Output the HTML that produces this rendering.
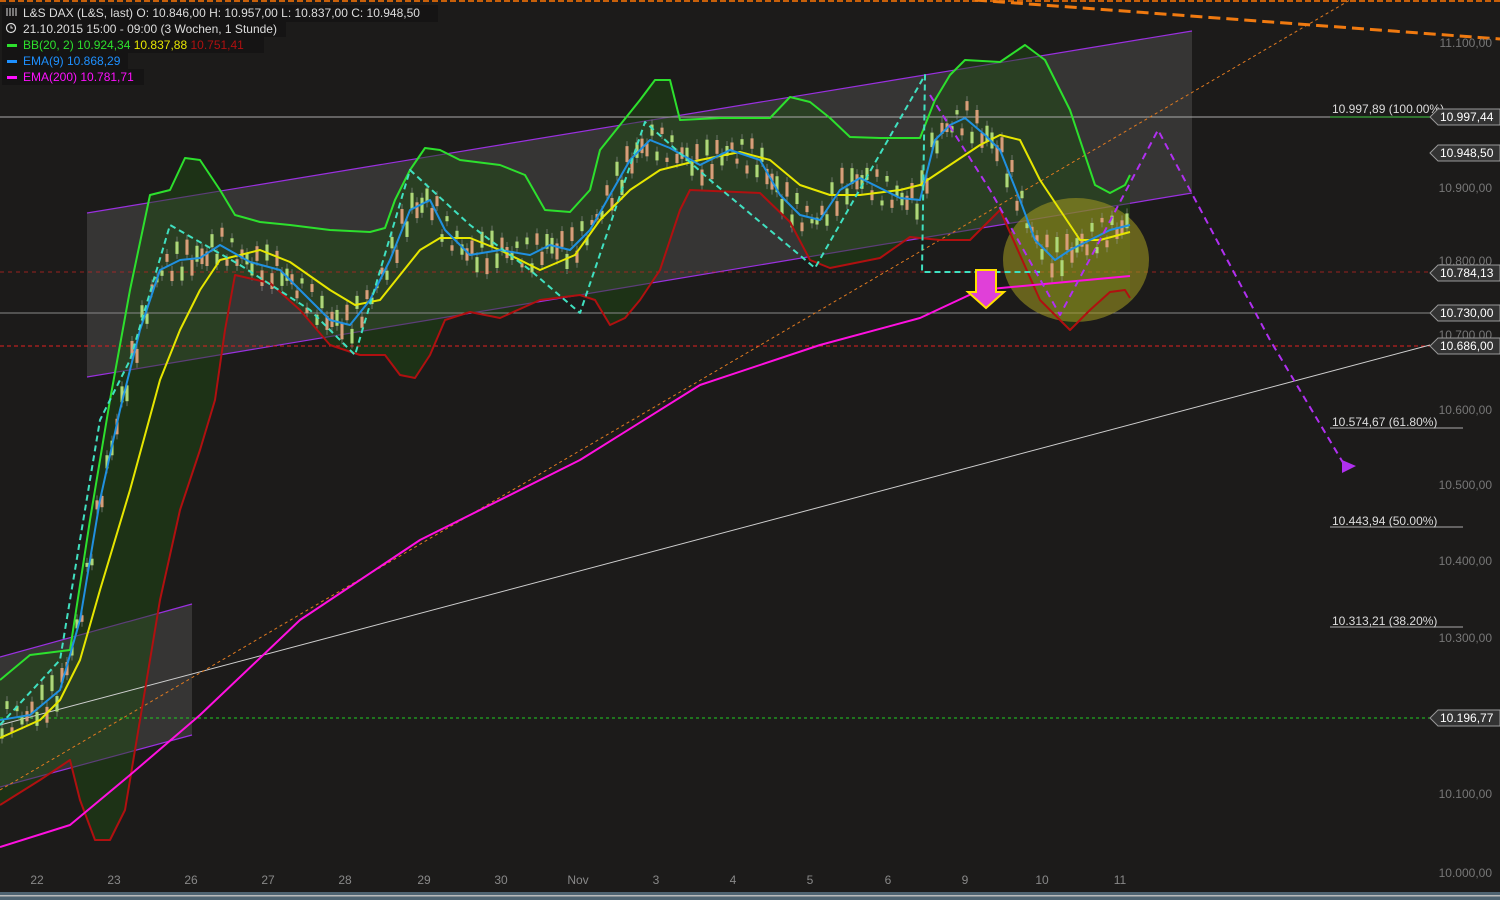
<!DOCTYPE html>
<html><head><meta charset="utf-8"><style>
html,body{margin:0;padding:0;background:#1c1b1a;}
svg{display:block;font-family:"Liberation Sans",sans-serif;}
</style></head><body>
<svg id="s" width="1500" height="900" viewBox="0 0 1500 900" xmlns="http://www.w3.org/2000/svg">
<rect width="1500" height="900" fill="#1c1b1a"/>
<line x1="0" y1="1" x2="1500" y2="1" stroke="#c8600a" stroke-width="2" stroke-dasharray="6,3"/>
<polygon points="87,213 1192,31 1192,193 87,377" fill="#3b3a3a" fill-opacity="0.85"/>
<line x1="87" y1="213" x2="1192" y2="31" stroke="#9a30e0" stroke-width="1.2"/>
<line x1="87" y1="377" x2="1192" y2="193" stroke="#9a30e0" stroke-width="1.2"/>
<polygon points="0,657 192,604 192,735 0,787" fill="#3b3a3a" fill-opacity="0.85"/>
<line x1="0" y1="657" x2="192" y2="604" stroke="#9a30e0" stroke-width="1.2"/>
<line x1="0" y1="787" x2="192" y2="735" stroke="#9a30e0" stroke-width="1.2"/>
<g id="fill"></g>
<line x1="0" y1="117" x2="1463" y2="117" stroke="#aaa" stroke-width="1"/>
<line x1="1330" y1="117" x2="1463" y2="117" stroke="#4c4" stroke-width="1"/>
<line x1="0" y1="272" x2="1430" y2="272" stroke="#c22" stroke-width="1" stroke-dasharray="4,4" stroke-opacity="0.7"/>
<line x1="0" y1="313" x2="1430" y2="313" stroke="#888" stroke-width="1"/>
<line x1="0" y1="346" x2="1430" y2="346" stroke="#e02020" stroke-width="1" stroke-dasharray="4,3"/>
<line x1="0" y1="718" x2="1430" y2="718" stroke="#22cc22" stroke-width="1" stroke-dasharray="3,3"/>
<line x1="1330" y1="428" x2="1463" y2="428" stroke="#aaa"/>
<line x1="1330" y1="527" x2="1463" y2="527" stroke="#aaa"/>
<line x1="1330" y1="627" x2="1463" y2="627" stroke="#aaa"/>
<line x1="0" y1="725" x2="1430" y2="345" stroke="#cfcfcf" stroke-width="1"/>
<line x1="0" y1="790" x2="1350" y2="0" stroke="#e07a20" stroke-width="1" stroke-dasharray="3,3"/>
<line x1="975" y1="0" x2="1500" y2="39" stroke="#f07a10" stroke-width="3" stroke-dasharray="12,6"/>
<ellipse cx="1076" cy="260" rx="73" ry="62" fill="#a59c20" fill-opacity="0.55"/>
<g id="lines"></g>
<polygon points="976,270 996,270 996,292 1004,292 986,308 968,292 976,292" fill="#e040d8" stroke="#ffe000" stroke-width="2"/>
<polygon points="1342,460 1356,466 1342,473" fill="#b030f0"/>
<g font-size="12" fill="#ddd">
<text x="1332" y="113">10.997,89 (100.00%)</text>
<text x="1332" y="426">10.574,67 (61.80%)</text>
<text x="1332" y="525">10.443,94 (50.00%)</text>
<text x="1332" y="625">10.313,21 (38.20%)</text>
</g>
<g font-size="12" fill="#777" text-anchor="end">
<text x="1492" y="47">11.100,00</text>
<text x="1492" y="192">10.900,00</text>
<text x="1492" y="265">10.800,00</text>
<text x="1492" y="339">10.700,00</text>
<text x="1492" y="414">10.600,00</text>
<text x="1492" y="489">10.500,00</text>
<text x="1492" y="565">10.400,00</text>
<text x="1492" y="642">10.300,00</text>
<text x="1492" y="798">10.100,00</text>
<text x="1492" y="877">10.000,00</text>
</g>
<g id="tags"></g>
<g font-size="12" fill="#888" text-anchor="middle">
<text x="37" y="884">22</text><text x="114" y="884">23</text><text x="191" y="884">26</text><text x="268" y="884">27</text><text x="345" y="884">28</text><text x="424" y="884">29</text><text x="501" y="884">30</text><text x="578" y="884">Nov</text><text x="656" y="884">3</text><text x="733" y="884">4</text><text x="810" y="884">5</text><text x="888" y="884">6</text><text x="965" y="884">9</text><text x="1042" y="884">10</text><text x="1120" y="884">11</text>
</g>
<rect x="0" y="892" width="1500" height="8" fill="#4f6472"/>
<rect x="0" y="895" width="1500" height="1.5" fill="#bbb"/>
<rect x="2" y="5" width="436" height="17" fill="#151414"/>
<rect x="2" y="21" width="284" height="16" fill="#151414"/>
<rect x="2" y="37" width="262" height="16" fill="#151414"/>
<rect x="2" y="53" width="126" height="16" fill="#151414"/>
<rect x="2" y="69" width="142" height="16" fill="#151414"/>
<g font-size="12" style="white-space:pre">
<text x="23" y="17" fill="#ddd">L&amp;S DAX (L&amp;S, last)  O: 10.846,00  H: 10.957,00  L: 10.837,00  C: 10.948,50</text>
<text x="23" y="33" fill="#ddd">21.10.2015 15:00 - 09:00 (3 Wochen, 1 Stunde)</text>
<text x="23" y="49"><tspan fill="#2de02d">BB(20, 2)  10.924,34  </tspan><tspan fill="#e6e600">10.837,88  </tspan><tspan fill="#b01010">10.751,41</tspan></text>
<text x="23" y="65" fill="#1e90ff">EMA(9)  10.868,29</text>
<text x="23" y="81" fill="#ff10ff">EMA(200)  10.781,71</text>
</g>
<rect x="7" y="44" width="10" height="3" fill="#2de02d"/>
<rect x="7" y="60" width="10" height="3" fill="#1e90ff"/>
<rect x="7" y="76" width="10" height="3" fill="#ff10ff"/>
<circle cx="11" cy="28" r="4.5" fill="none" stroke="#ddd" stroke-width="1.2"/><path d="M11 25.5V28H13" stroke="#ddd" fill="none"/>
<path d="M7 8v8M10 8v8M13 8v8M16 8v8" stroke="#ddd" stroke-width="1"/>
</svg>
<script>
const NS="http://www.w3.org/2000/svg";
const G=[[0,680],[30,655],[70,650],[90,520],[110,400],[130,290],[150,195],[170,190],[185,158],[200,160],[220,190],[235,215],[260,222],[290,225],[330,230],[370,232],[385,228],[395,200],[410,170],[425,148],[440,150],[460,160],[500,165],[525,175],[545,210],[570,212],[590,190],[600,150],[620,125],[640,100],[655,80],[670,80],[680,120],[720,118],[770,118],[790,97],[810,102],[830,118],[850,137],[880,138],[920,138],[935,100],[950,75],[965,60],[1000,62],[1025,45],[1045,60],[1070,110],[1095,185],[1110,193],[1125,185],[1130,175]];
const R=[[0,805],[40,780],[70,760],[80,800],[95,840],[110,840],[125,810],[140,720],[160,600],[180,510],[200,450],[215,400],[225,330],[235,275],[270,283],[300,310],[330,345],[360,355],[385,355],[400,375],[415,378],[430,355],[445,320],[470,312],[500,318],[540,300],[580,295],[595,300],[610,325],[625,318],[640,300],[660,270],[680,210],[690,190],[760,193],[790,222],[810,260],[830,268],[860,262],[880,258],[910,237],[940,240],[970,240],[1000,210],[1020,255],[1040,300],[1070,330],[1090,310],[1110,292],[1125,290],[1130,298]];
const Y=[[0,738],[40,720],[60,700],[80,660],[100,590],[130,490],[160,380],[180,330],[200,290],[220,260],[260,250],[290,262],[330,290],[355,305],[380,300],[400,275],[420,250],[440,238],[470,238],[500,250],[540,270],[575,255],[600,220],[630,190],[660,170],[700,160],[740,152],[770,160],[800,185],[830,195],[860,195],[900,190],[920,185],[950,165],[980,145],[1000,135],[1020,140],[1040,180],[1060,210],[1080,240],[1100,240],[1130,232]];
const B=[[0,720],[30,715],[60,690],[80,620],[100,500],[120,410],[140,330],[160,270],[180,260],[200,258],[220,245],[250,262],[280,270],[310,300],[330,320],[350,325],[370,300],[390,260],[410,210],[430,200],[445,230],[470,255],[500,250],[530,255],[550,245],[570,250],[590,230],[610,195],[630,160],[650,140],[670,148],[700,165],[730,150],[760,160],[780,195],[800,215],[820,220],[840,190],[860,178],[900,198],[920,200],[935,140],[950,125],[965,118],[985,135],[1000,150],[1020,200],[1035,240],[1055,260],[1070,250],[1090,240],[1110,230],[1130,225]];
const M=[[0,847],[70,825],[130,775],[200,715],[300,620],[420,540],[580,460],[700,385],[820,345],[920,318],[980,290],[1130,276]];
const C=[[0,725],[60,660],[100,420],[130,360],[170,225],[240,265],[310,310],[355,355],[410,170],[470,225],[530,270],[580,313],[645,122],[710,180],[815,268],[925,75],[922,272],[1040,272]];
const P=[[930,95],[990,190],[1060,315],[1100,240],[1158,130],[1190,190],[1270,340],[1345,466]];
const s=a=>a.map(p=>p.join(",")).join(" ");
const f=document.getElementById("fill");
let pg=document.createElementNS(NS,"polygon");pg.setAttribute("points",s(G.concat(R.slice().reverse())));pg.setAttribute("fill","#1e4a12");pg.setAttribute("fill-opacity","0.5");f.appendChild(pg);
const L=document.getElementById("lines");
function pl(a,c,w,d){let e=document.createElementNS(NS,"polyline");e.setAttribute("points",s(a));e.setAttribute("fill","none");e.setAttribute("stroke",c);e.setAttribute("stroke-width",w);e.setAttribute("stroke-linejoin","round");if(d)e.setAttribute("stroke-dasharray",d);L.appendChild(e);}
for(let x=2;x<1130;x+=5){let i=0;while(i<B.length-2&&B[i+1][0]<x)i++;let a=B[i],b=B[i+1];let y=a[1]+(b[1]-a[1])*(x-a[0])/(b[0]-a[0]);let off=Math.sin(x*0.7)*14;let h=4+Math.abs(Math.sin(x*1.3))*12;let r=document.createElementNS(NS,"rect");r.setAttribute("x",x-1.5);r.setAttribute("y",y+off-h/2);r.setAttribute("width",3);r.setAttribute("height",h);r.setAttribute("fill",Math.sin(x*0.9)>0?"#b8f070":"#f0a070");L.appendChild(r);let w=document.createElementNS(NS,"line");w.setAttribute("x1",x);w.setAttribute("x2",x);w.setAttribute("y1",y+off-h/2-5);w.setAttribute("y2",y+off+h/2+5);w.setAttribute("stroke","#999");w.setAttribute("stroke-width",0.6);L.appendChild(w);}
pl(R,"#b01010",2);pl(G,"#2de02d",2);pl(Y,"#e6e600",2);pl(B,"#2090e0",2);pl(M,"#ff10e0",2);
pl(C,"#40e0c0",2,"6,4");pl(P,"#b030f0",2,"7,5");
const T=document.getElementById("tags");
[[117,"10.997,44"],[153,"10.948,50"],[273,"10.784,13"],[313,"10.730,00"],[346,"10.686,00"],[718,"10.196,77"]].forEach(([y,t])=>{let p=document.createElementNS(NS,"polygon");p.setAttribute("points",`1430,${y} 1438,${y-8} 1500,${y-8} 1500,${y+8} 1438,${y+8}`);p.setAttribute("fill","#333");p.setAttribute("stroke","#999");T.appendChild(p);let tx=document.createElementNS(NS,"text");tx.setAttribute("x",1440);tx.setAttribute("y",y+4);tx.setAttribute("font-size","12");tx.setAttribute("fill","#fff");tx.textContent=t;T.appendChild(tx);});
</script>
</body></html>
